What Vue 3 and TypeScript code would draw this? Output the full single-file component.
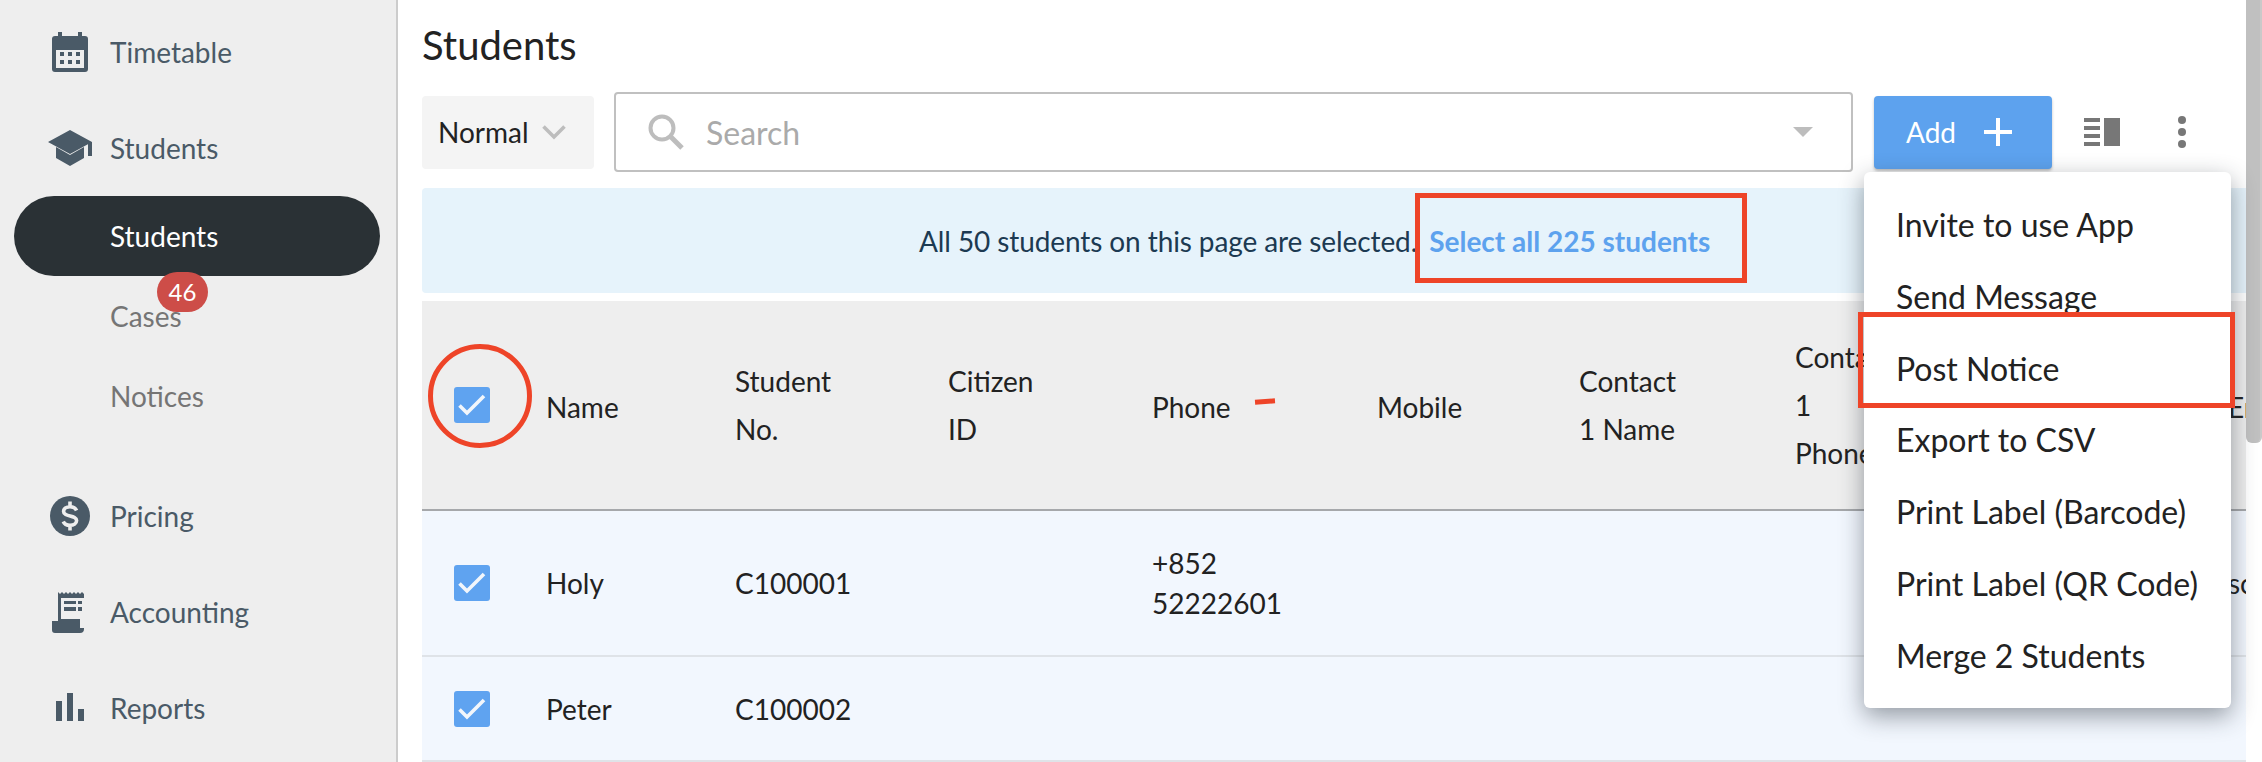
<script setup lang="ts">
interface NavItem {
  label: string
  icon?: string
  kind: 'top' | 'sub' | 'active'
  badge?: string
  gap?: boolean
}

const nav: NavItem[] = [
  { label: 'Timetable', icon: 'calendar', kind: 'top' },
  { label: 'Students', icon: 'cap', kind: 'top' },
  { label: 'Students', kind: 'active' },
  { label: 'Cases', kind: 'sub', badge: '46' },
  { label: 'Notices', kind: 'sub' },
  { label: 'Pricing', icon: 'dollar', kind: 'top', gap: true },
  { label: 'Accounting', icon: 'receipt', kind: 'top' },
  { label: 'Reports', icon: 'bars', kind: 'top' },
]

const headers: string[][] = [
  ['Name'],
  ['Student', 'No.'],
  ['Citizen', 'ID'],
  ['Phone'],
  ['Mobile'],
  ['Contact', '1 Name'],
  ['Contact', '1', 'Phone'],
  ['Email'],
]

const rows = [
  { name: 'Holy', no: 'C100001', phone: ['+852', '52222601'], email: 'school@example.com', cls: 'tall' },
  { name: 'Peter', no: 'C100002', phone: [] as string[], email: '', cls: 'short' },
]

const menu = [
  'Invite to use App',
  'Send Message',
  'Post Notice',
  'Export to CSV',
  'Print Label (Barcode)',
  'Print Label (QR Code)',
  'Merge 2 Students',
]
</script>

<template>
  <div class="page">
    <aside class="sidebar">
      <div
        v-for="item in nav"
        :key="item.label + item.kind"
        class="nav-item"
        :class="[item.kind, { gap: item.gap }]"
      >
        <span v-if="item.kind === 'top'" class="nav-icon">
          <svg v-if="item.icon === 'calendar'" width="44" height="44" viewBox="0 0 44 44">
            <path fill="#4a5a67" fill-rule="evenodd" d="M10 2h4v4h16V2h4v4h3a3 3 0 0 1 3 3v30a3 3 0 0 1-3 3H7a3 3 0 0 1-3-3V9a3 3 0 0 1 3-3h3zM8 20v18h28V20z" />
            <path fill="#4a5a67" d="M12 22h4v4h-4zM20 22h4v4h-4zM28 22h4v4h-4zM12 30h4v4h-4zM20 30h4v4h-4zM28 30h4v4h-4z" />
          </svg>
          <svg v-else-if="item.icon === 'cap'" width="44" height="44" viewBox="0 -1 44 44">
            <path fill="#4a5a67" d="M0 15 22 3l22 12-22 12zM40 17l4-2v14h-4zM8 20l14 8 14-8v11l-14 8-14-8z" />
          </svg>
          <svg v-else-if="item.icon === 'dollar'" width="44" height="44" viewBox="0 0 44 44">
            <circle cx="22" cy="22" r="20" fill="#4a5a67" />
            <path fill="none" stroke="#eeeeee" stroke-width="3.6" d="M28.5 16.5c-1-2.600-3.600-3.800-6.500-3.800-3.600 0-6.400 1.900-6.400 4.700 0 6 13 3.200 13 9.200 0 2.800-2.900 4.700-6.600 4.700-3 0-5.700-1.200-6.700-3.800M22 7.500v5.500M22 31v5.500" />
          </svg>
          <svg v-else-if="item.icon === 'receipt'" width="44" height="44" viewBox="0 1 44 44">
            <path fill="#4a5a67" fill-rule="evenodd" d="M10 3l2 2 2-2 2 2 2-2 2 2 2-2 2 2 2-2 2 2 2-2 2 2 2-2 2 2v35a4 4 0 0 1-4 4H7a3 3 0 0 1-3-3v-9h6zM13 9v21h19v9h4V9z" />
            <path fill="#4a5a67" d="M16 12h12v3H16zM30 12h4v3h-4zM16 18h12v4H16zM30 18h4v4h-4z" />
          </svg>
          <svg v-else width="44" height="44" viewBox="0 0 44 44">
            <path fill="#4a5a67" d="M8 15h6v20H8zM19 7h6v28h-6zM30 23h6v12h-6z" />
          </svg>
        </span>
        <span class="nav-label">{{ item.label }}</span>
        <span v-if="item.badge" class="badge">{{ item.badge }}</span>
      </div>
    </aside>

    <main class="content">
      <h1 class="title">Students</h1>

      <div class="toolbar">
        <div class="filter">
          <span>Normal</span>
          <svg width="24" height="16" viewBox="0 0 24 16"><path fill="none" stroke="#bdbdbd" stroke-width="3.600" d="M1.500 2.500 12 13 22.500 2.500" /></svg>
        </div>
        <div class="search">
          <svg width="36" height="36" viewBox="0 0 36 36">
            <circle cx="14" cy="14" r="11.500" fill="none" stroke="#bdbdbd" stroke-width="4" />
            <path stroke="#bdbdbd" stroke-width="5" d="M22 22l12 12" />
          </svg>
          <span class="search-text">Search</span>
          <span class="caret"></span>
        </div>
        <button class="add" type="button">
          <span>Add</span>
          <svg width="28" height="28" viewBox="0 0 28 28"><path stroke="#fff" stroke-width="4" d="M14 0v28M0 14h28" /></svg>
        </button>
        <svg class="cols" width="36" height="28" viewBox="0 0 36 28">
          <path fill="#777" d="M0 0h16v4H0zM0 8h16v4H0zM0 16h16v4H0zM0 24h16v4H0zM20 0h16v28H20z" />
        </svg>
        <svg class="dots" width="8" height="32" viewBox="0 0 8 32">
          <circle cx="4" cy="4" r="4" fill="#777" /><circle cx="4" cy="16" r="4" fill="#777" /><circle cx="4" cy="28" r="4" fill="#777" />
        </svg>
      </div>

      <div class="banner">
        <span class="banner-text">All 50 students on this page are selected.</span>
        <a class="select-all">Select all 225 students</a>
      </div>

      <div class="table-wrap">
        <table class="table">
          <colgroup>
            <col class="c0" /><col class="c1" /><col class="c2" /><col class="c3" /><col class="c4" />
            <col class="c5" /><col class="c6" /><col class="c7" /><col class="c8" />
          </colgroup>
          <thead>
            <tr>
              <th>
                <span class="check"><svg width="36" height="36" viewBox="0 0 36 36"><path fill="none" stroke="#f2f6fb" stroke-width="3.600" d="M5.500 18.500l7.500 7.500L30 9" /></svg></span>
              </th>
              <th v-for="(h, i) in headers" :key="i" :class="{ single: h.length === 1 }">
                <div v-for="line in h" :key="line">{{ line }}</div>
              </th>
            </tr>
          </thead>
          <tbody>
            <tr v-for="r in rows" :key="r.no" :class="r.cls">
              <td>
                <span class="check"><svg width="36" height="36" viewBox="0 0 36 36"><path fill="none" stroke="#f2f6fb" stroke-width="3.600" d="M5.500 18.500l7.500 7.500L30 9" /></svg></span>
              </td>
              <td>{{ r.name }}</td>
              <td>{{ r.no }}</td>
              <td></td>
              <td class="phone"><div v-for="p in r.phone" :key="p">{{ p }}</div></td>
              <td></td>
              <td></td>
              <td></td>
              <td>{{ r.email }}</td>
            </tr>
          </tbody>
        </table>
      </div>
    </main>

    <div class="scrollbar"><div class="thumb"></div></div>

    <ul class="menu">
      <li v-for="m in menu" :key="m">{{ m }}</li>
    </ul>

    <div class="mark mark-select"></div>
    <div class="mark mark-post"></div>
    <div class="mark mark-circle"></div>
    <div class="mark mark-dash"></div>
  </div>
</template>

<style>
html, body { margin: 0; background: #fff; }
</style>

<style scoped>
.page {
  position: relative;
  display: flex;
  width: 2262px;
  height: 762px;
  overflow: hidden;
  background: #fff;
  font-family: Lato, "Open Sans", sans-serif;
  font-size: 28px;
  color: #222;
}
.sidebar {
  flex: 0 0 398px;
  box-sizing: border-box;
  padding: 4px 16px 0 14px;
  background: #eeeeee;
  border-right: 2px solid #cccccc;
}
.nav-item {
  position: relative;
  display: flex;
  align-items: center;
  box-sizing: border-box;
  height: 96px;
  padding-left: 48px;
  color: #4a5a67;
}
.nav-item.gap { margin-top: 32px; }
.nav-icon { display: flex; width: 44px; margin-left: -14px; margin-right: 18px; }
.nav-item.sub, .nav-item.active { height: 80px; padding-left: 96px; }
.nav-item.sub { color: #757575; }
.nav-item.active { background: #2a3135; color: #fff; border-radius: 40px; }
.badge {
  position: absolute;
  left: 143px;
  top: -4px;
  width: 51px;
  height: 40px;
  border-radius: 20px;
  background: #cd4d48;
  color: #fff;
  font-size: 24px;
  line-height: 40px;
  text-align: center;
}
.content {
  flex: 1;
  min-width: 0;
  box-sizing: border-box;
  padding: 0 0 0 24px;
}
.title { margin: 0; font-size: 40px; font-weight: 400; line-height: 48px; padding-top: 21px; height: 92px; box-sizing: border-box; }
.toolbar { display: flex; align-items: center; height: 80px; }
.filter {
  display: flex;
  align-items: center;
  box-sizing: border-box;
  width: 172px;
  height: 73px;
  padding-left: 16px;
  gap: 13px;
  background: #f4f4f4;
  border-radius: 4px;
}
.search {
  display: flex;
  align-items: center;
  box-sizing: border-box;
  width: 1239px;
  height: 80px;
  margin-left: 20px;
  padding: 0 38px 0 32px;
  border: 2px solid #c0c0c0;
  border-radius: 4px;
}
.search-text { flex: 1; margin-left: 22px; color: #aaa; font-size: 32px; }
.caret { width: 0; height: 0; border-left: 10px solid transparent; border-right: 10px solid transparent; border-top: 10px solid #bdbdbd; }
.add {
  display: flex;
  align-items: center;
  width: 178px;
  height: 73px;
  margin-left: 21px;
  padding: 0 0 0 32px;
  gap: 28px;
  border: 0;
  border-radius: 4px;
  background: #5da2ee;
  color: #fff;
  font: inherit;
  box-shadow: 0 2px 3px rgba(0, 0, 0, 0.25);
}
.cols { margin-left: 32px; }
.dots { margin-left: 58px; }
.banner {
  display: flex;
  align-items: center;
  height: 105px;
  margin-top: 16px;
  padding-left: 497px;
  gap: 12px;
  background: #e6f3fb;
  border-radius: 4px;
  color: #1c3a52;
}
.banner-text { letter-spacing: -0.1px; }
.select-all { color: #5da2ee; font-weight: 700; }
.table-wrap { width: 1824px; margin-top: 8px; overflow: hidden; }
.table { width: 2200px; table-layout: fixed; border-collapse: collapse; }
.c0 { width: 124px; } .c1 { width: 189px; } .c2 { width: 213px; } .c3 { width: 204px; }
.c4 { width: 225px; } .c5 { width: 202px; } .c6 { width: 216px; } .c7 { width: 433px; } .c8 { width: 394px; }
th, td { padding: 0; text-align: left; font-weight: 400; white-space: nowrap; vertical-align: middle; }
thead tr { height: 209px; background: #eeeeee; border-bottom: 2px solid #a6a8ab; }
th { line-height: 48px; }
th.single { padding-top: 4px; }
tbody tr { background: #f2f7fe; border-bottom: 2px solid #dfe3e8; }
tbody tr.tall { height: 146px; }
tbody tr.short { height: 105px; }
.phone { line-height: 40px; }
.check {
  display: flex;
  width: 36px;
  height: 36px;
  margin-left: 32px;
  background: #5fa3f0;
  border-radius: 3px;
}
.scrollbar { position: absolute; right: 0; top: 0; width: 16px; height: 443px; }
.thumb { box-sizing: border-box; width: 16px; height: 100%; background: #c0c0c0; border-right: 2px solid #c9c9c9; border-radius: 0 0 6px 6px; }
.menu {
  position: absolute;
  left: 1864px;
  top: 172px;
  width: 367px;
  height: 536px;
  box-sizing: border-box;
  margin: 0;
  padding: 17px 0 0 32px;
  list-style: none;
  background: #fff;
  border-radius: 6px;
  box-shadow: 0 8px 24px rgba(30, 40, 50, 0.45);
  font-size: 32px;
}
.menu li { height: 71.8px; line-height: 71.8px; white-space: nowrap; }
.mark { position: absolute; box-sizing: border-box; border: 5px solid #ee4428; }
.mark-select { left: 1415px; top: 193px; width: 332px; height: 90px; }
.mark-post { left: 1858px; top: 312px; width: 377px; height: 96px; }
.mark-circle { left: 428px; top: 344px; width: 104px; height: 104px; border-radius: 50%; }
.mark-dash { left: 1255px; top: 399px; width: 20px; height: 5px; border: 0; background: #ee4428; transform: rotate(-4deg); }
</style>
